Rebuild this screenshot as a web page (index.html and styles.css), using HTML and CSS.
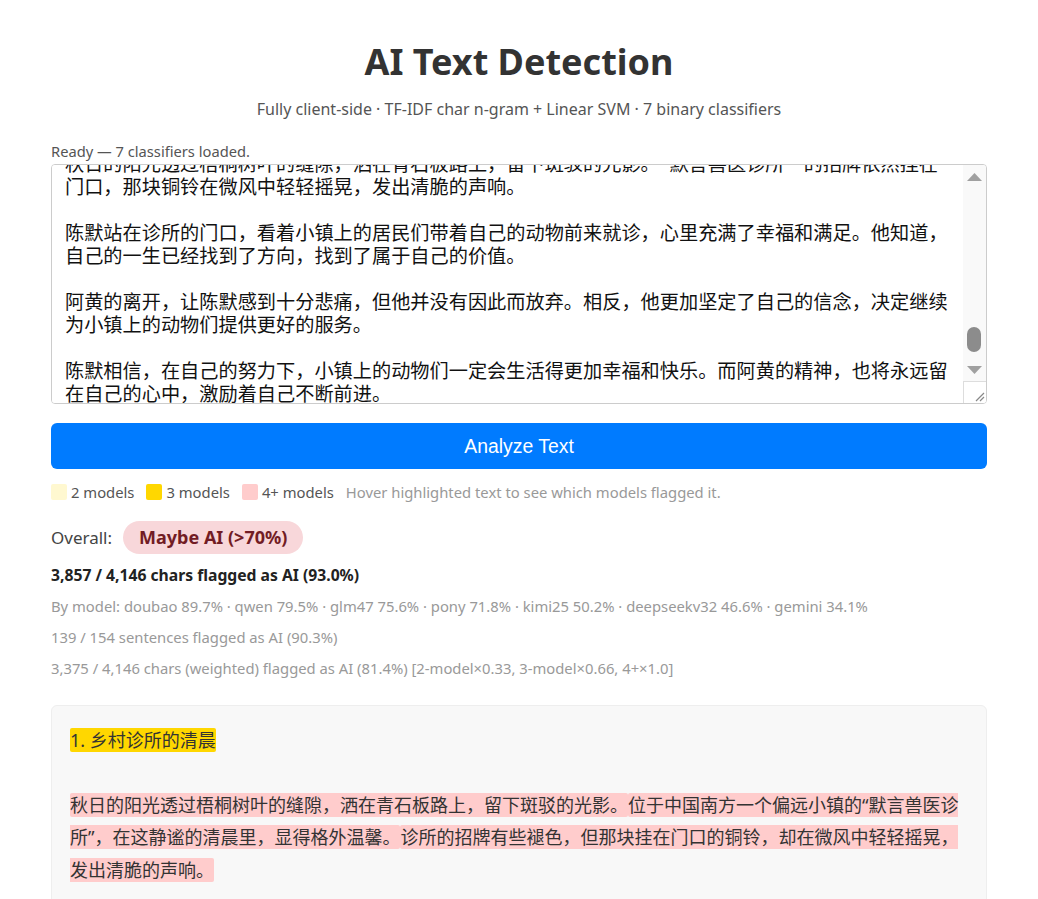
FILE: index.html
```html
<!DOCTYPE html>
<html lang="en">
  <head>
    <meta charset="UTF-8" />
    <meta name="viewport" content="width=device-width, initial-scale=1.0" />
    <title>AI Text Detection</title>
    <link rel="stylesheet" href="styles.css">
  </head>
  <body>
    <main class="app">
      <h1>AI Text Detection</h1>
      <p class="subtitle">Fully client-side · TF-IDF char n-gram + Linear SVM · 7 binary classifiers</p>

      <div class="status" id="status">Ready — 7 classifiers loaded.</div>

      <div class="editor">
        <textarea id="source" class="source" spellcheck="false">1. 乡村诊所的清晨

秋日的阳光透过梧桐树叶的缝隙，洒在青石板路上，留下斑驳的光影。位于中国南方一个偏远小镇的“默言兽医诊所”，在这静谧的清晨里，显得格外温馨。诊所的招牌有些褪色，但那块挂在门口的铜铃，却在微风中轻轻摇晃，发出清脆的声响。

陈默是这家诊所唯一的兽医。他今年三十五岁，戴着一副黑框眼镜，说话总是轻声细语。十年前，他从省城的农业大学毕业，放弃了大城市的高薪工作，回到了这个生他养他的小镇。

每天清晨，他都会第一个来到诊所，打开窗户，让新鲜的空气流进来。然后，他会给诊所里寄养的小动物们准备早餐，检查它们的身体状况，再把诊疗台擦得干干净净。

阿黄是一只土黄色的老狗，它跟了陈默整整八年。每当陈默推开诊所的大门，阿黄总会摇着尾巴迎上来，用湿漉漉的鼻子蹭他的手心，仿佛在说：“早上好，主人。”

2. 意外的访客

这天上午，诊所里来了一位特殊的客人。一个七八岁的小女孩抱着一只受伤的小猫，怯生生地站在门口，眼睛里噙满了泪水。

“叔叔，求求你救救它吧。”小女孩的声音有些颤抖，“它被车撞了，一直在流血。”

陈默连忙接过小猫，仔细地检查起来。小猫的后腿骨折了，身上还有几处擦伤，但所幸没有伤及内脏。他一边安慰小女孩，一边熟练地为小猫清理伤口、固定骨折的后腿。

一个小时后，小猫终于安静地睡着了。小女孩破涕为笑，从口袋里掏出几枚硬币，小心翼翼地放在桌上。陈默笑着摇了摇头，把硬币塞回了她的手里。

“等它好了，你要常常来看它。”陈默说，“它会想你的。”

3. 风雨之夜

入夏以后，小镇迎来了一场罕见的暴雨。深夜，诊所的铜铃突然急促地响了起来。陈默披上衣服打开门，看见村东头的老李浑身湿透，怀里抱着一头刚出生的小牛犊。

“陈医生，母牛难产，小牛一直不吃奶，你快想想办法吧！”

陈默二话不说，背起药箱就跟着老李冲进了雨里。泥泞的山路很难走，他摔了好几跤，膝盖磕破了皮，却一声也没有吭。等他们赶到牛棚的时候，天边已经泛起了鱼肚白。

那一夜，陈默守着母牛和小牛犊，直到它们都脱离了危险。老李紧紧握着他的手，半天说不出一句话来。

4. 告别

冬天来临的时候，阿黄病倒了。它已经很老了，走路变得越来越慢，常常趴在诊所的门口，一睡就是一整天。陈默用尽了所有的办法，却终究没能留住它。

那天傍晚，阿黄把头靠在陈默的膝盖上，安静地闭上了眼睛。陈默抱着它坐了很久很久，直到窗外的天色完全暗了下来。

第二天，他把阿黄葬在了诊所后面的梧桐树下。小镇上的孩子们听说了这件事，纷纷跑来，在小小的坟前放上了一束束野花。

5. 新的开始

又是一年秋天。

秋日的阳光透过梧桐树叶的缝隙，洒在青石板路上，留下斑驳的光影。“默言兽医诊所”的招牌依然挂在门口，那块铜铃在微风中轻轻摇晃，发出清脆的声响。

陈默站在诊所的门口，看着小镇上的居民们带着自己的动物前来就诊，心里充满了幸福和满足。他知道，自己的一生已经找到了方向，找到了属于自己的价值。

阿黄的离开，让陈默感到十分悲痛，但他并没有因此而放弃。相反，他更加坚定了自己的信念，决定继续为小镇上的动物们提供更好的服务。

陈默相信，在自己的努力下，小镇上的动物们一定会生活得更加幸福和快乐。而阿黄的精神，也将永远留在自己的心中，激励着自己不断前进。</textarea>
        <div class="scrollbar" aria-hidden="true">
          <span class="sb-arrow">
            <svg width="15" height="8" viewBox="0 0 15 8"><path d="M7.5 0L15 8H0z" fill="#a0a0a0" /></svg>
          </span>
          <span class="sb-track"><span class="sb-thumb"></span></span>
          <span class="sb-arrow">
            <svg width="15" height="8" viewBox="0 0 15 8"><path d="M0 0H15L7.5 8z" fill="#a0a0a0" /></svg>
          </span>
          <span class="sb-corner">
            <svg width="12" height="12" viewBox="0 0 12 12">
              <path d="M11 3L3 11M11 7L7 11" stroke="#888" stroke-width="1.2" fill="none" />
            </svg>
          </span>
        </div>
      </div>

      <button type="button" class="analyze">Analyze Text</button>

      <div class="legend">
        <span class="swatch swatch-2"></span><span class="legend-label">2 models</span>
        <span class="swatch swatch-3"></span><span class="legend-label">3 models</span>
        <span class="swatch swatch-4"></span><span class="legend-label">4+ models</span>
        <span class="legend-hint">Hover highlighted text to see which models flagged it.</span>
      </div>

      <div class="overall">
        <span>Overall:</span>
        <span class="verdict">Maybe AI (&gt;70%)</span>
      </div>

      <p class="stat stat-main">3,857 / 4,146 chars flagged as AI (93.0%)</p>
      <p class="stat">By model: doubao 89.7% · qwen 79.5% · glm47 75.6% · pony 71.8% · kimi25 50.2% · deepseekv32 46.6% · gemini 34.1%</p>
      <p class="stat">139 / 154 sentences flagged as AI (90.3%)</p>
      <p class="stat">3,375 / 4,146 chars (weighted) flagged as AI (81.4%) [2-model×0.33, 3-model×0.66, 4+×1.0]</p>

      <div class="result"><span class="hl hl-3" title="doubao, qwen, glm47">1. 乡村诊所的清晨</span>

<span class="hl hl-4" title="doubao, qwen, glm47, pony, kimi25">秋日的阳光透过梧桐树叶的缝隙，洒在青石板路上，留下斑驳的光影。</span><span class="hl hl-4" title="doubao, qwen, glm47, pony">位于中国南方一个偏远小镇的“默言兽医诊所”，在这静谧的清晨里，显得格外温馨。</span><span class="hl hl-4" title="doubao, qwen, glm47, pony, deepseekv32">诊所的招牌有些褪色，但那块挂在门口的铜铃，却在微风中轻轻摇晃，发出清脆的声响。</span>

<span class="hl hl-4" title="doubao, qwen, glm47, pony">陈默是这家诊所唯一的兽医。</span><span class="hl hl-3" title="doubao, qwen, kimi25">他今年三十五岁，戴着一副黑框眼镜，说话总是轻声细语。</span><span class="hl hl-4" title="doubao, qwen, glm47, pony, gemini">十年前，他从省城的农业大学毕业，放弃了大城市的高薪工作，回到了这个生他养他的小镇。</span>
</div>
    </main>

    <script>
      // keep the end of the story in view, as after pasting
      const source = document.getElementById("source");
      source.scrollTop = source.scrollHeight - source.clientHeight - 14;
    </script>
  </body>
</html>
```

FILE: styles.css
```css
* {
  box-sizing: border-box;
}

body {
  margin: 0;
  font-family: "Segoe UI", "Noto Sans", "Noto Sans CJK SC", sans-serif;
  color: #333;
  background: #fff;
}

.app {
  max-width: 960px;
  margin: 0 auto;
  padding: 40px 12px 40px;
}

h1 {
  margin: 0;
  font-size: 36px;
  line-height: 44px;
  text-align: center;
  color: #333;
}

.subtitle {
  margin: 14px 0 0;
  font-size: 16px;
  line-height: 22px;
  text-align: center;
  color: #555;
}

.status {
  margin-top: 21px;
  font-size: 14.7px;
  line-height: 20px;
  color: #555;
}

/* textarea plus its scrollbar column */
.editor {
  display: flex;
  height: 240px;
  margin-top: 3px;
  border: 1px solid #ccc;
  border-radius: 4px;
  overflow: hidden;
}

.source {
  flex: 1;
  min-width: 0;
  height: 100%;
  padding: 12px 12px 12px 13px;
  border: none;
  outline: none;
  font-family: "Noto Sans CJK SC", serif;
  font-size: 19.2px;
  line-height: 23px;
  color: #111;
  resize: none;
  scrollbar-width: none;
}

.scrollbar {
  display: flex;
  flex-direction: column;
  width: 23px;
  background: #f9f9f9;
}

.sb-arrow {
  display: flex;
  align-items: center;
  justify-content: center;
  height: 23px;
}

.sb-track {
  flex: 1;
  padding-top: 139px;
}

.sb-thumb {
  display: block;
  width: 14px;
  height: 25px;
  margin-left: 4px;
  border-radius: 7px;
  background: #8c8c8c;
}

.sb-corner {
  display: flex;
  align-items: flex-end;
  justify-content: flex-end;
  height: 22px;
  padding: 0 1px 1px 0;
  border-top: 1px solid #ddd;
  border-left: 1px solid #ddd;
  background: #fff;
}

.analyze {
  display: block;
  width: 100%;
  height: 46px;
  margin-top: 19px;
  border: none;
  border-radius: 6px;
  background: #007bff;
  color: #fff;
  font-family: "Liberation Sans", Arial, sans-serif;
  font-size: 19.4px;
  cursor: pointer;
}

.analyze:hover {
  background: #0069d9;
}

.legend {
  display: flex;
  align-items: center;
  margin-top: 13px;
  font-size: 14.8px;
  line-height: 20px;
  color: #555;
}

.swatch {
  width: 16px;
  height: 16px;
  border-radius: 2px;
  margin-right: 4px;
}

.swatch-2 {
  background: #fff8d0;
}

.swatch-3 {
  background: #ffd700;
}

.swatch-4 {
  background: #ffcccc;
}

.legend-label {
  margin-right: 12px;
}

.legend-hint {
  color: #999;
}

.overall {
  display: flex;
  align-items: center;
  gap: 11px;
  margin-top: 19px;
  font-size: 17px;
  color: #444;
}

.verdict {
  height: 33px;
  line-height: 33px;
  padding: 0 16px;
  border-radius: 17px;
  background: #f8d7da;
  color: #721c24;
  font-size: 18px;
  font-weight: bold;
}

.stat {
  margin: 11px 0 0;
  font-size: 14.8px;
  line-height: 20px;
  color: #999;
}

.stat-main {
  font-size: 15.7px;
  font-weight: bold;
  color: #222;
}

.result {
  margin-top: 27px;
  padding: 18px;
  border: 1px solid #eee;
  border-radius: 6px;
  background: #f8f8f8;
  font-size: 18px;
  line-height: 32.4px;
  color: #333;
  white-space: pre-wrap;
}

.hl {
  border-radius: 2px;
  cursor: help;
}

.hl-2 {
  background: #fff8d0;
}

.hl-3 {
  background: #ffd700;
}

.hl-4 {
  background: #ffcccc;
}
```
